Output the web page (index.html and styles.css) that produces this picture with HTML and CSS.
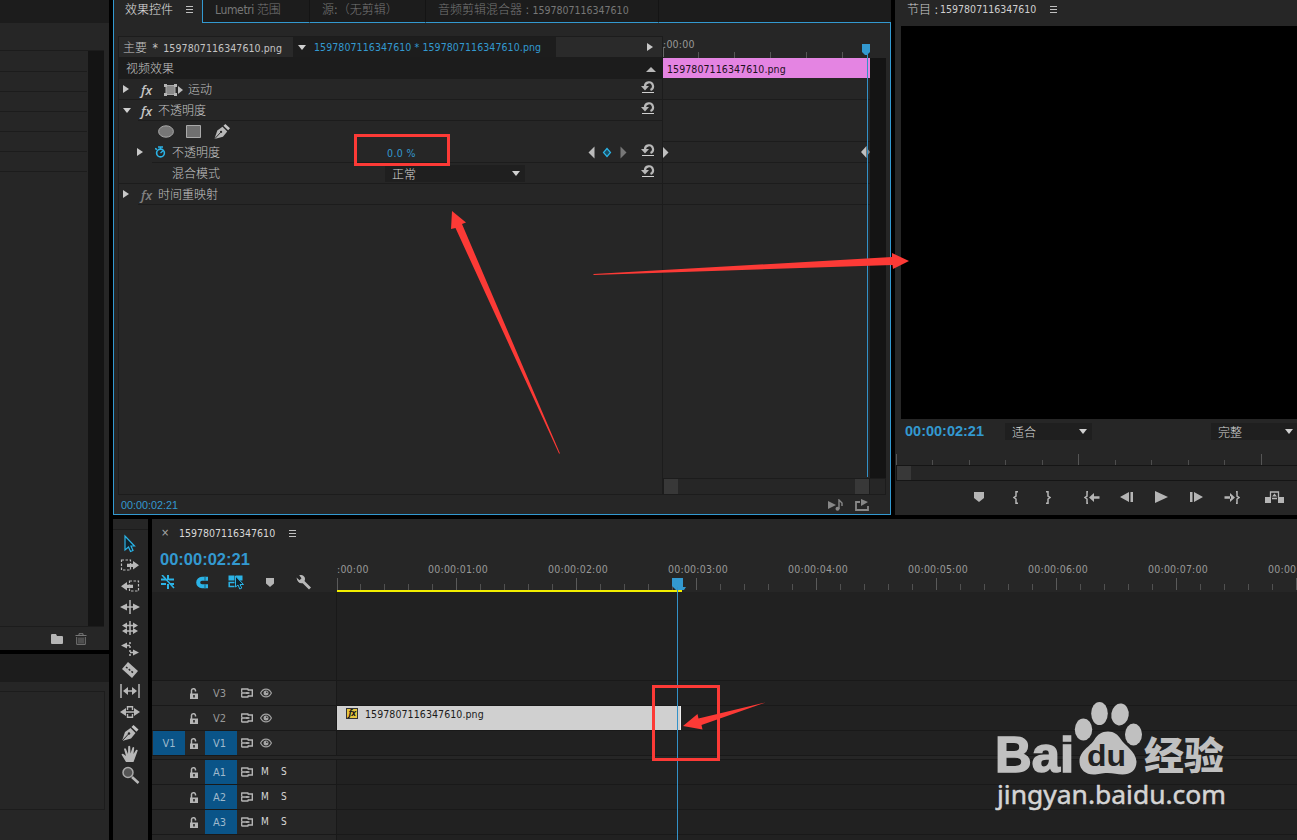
FILE: index.html
```
<!DOCTYPE html>
<html lang="zh-CN">
<head>
  <meta charset="UTF-8" />
  <title>Premiere</title>
  <link rel="stylesheet" href="styles.css">
</head>
<body>

  <!-- Shared icons -->
  <svg class="defs" width="0" height="0">
    <defs>
      <symbol id="reset" viewBox="0 0 14 14">
        <path d="M4 6.500A4 4 0 1 1 9.500 10" fill="none" stroke="#b8b8b8" stroke-width="2.200"/>
        <path d="M0 6h8L4 10.500z" fill="#b8b8b8"/>
        <path d="M1 12.500h12" stroke="#d0d0d0"/>
      </symbol>
      <symbol id="lock" viewBox="0 0 10 12">
        <path d="M2.500 6V3a2 2 0 0 1 4-.5v1" fill="none" stroke="#b5b5b5" stroke-width="1.500"/>
        <path d="M1 5.500h8V11H1z" fill="#b5b5b5"/>
        <path d="M4.200 7h1.600v2.500H4.200z" fill="#262626"/>
      </symbol>
      <symbol id="sync" viewBox="0 0 12 10">
        <path d="M.5 1h7M.5 5h7M.5 9h7M.7.500v4M.7 5v4M7 1v1.500M7 7.500V9" fill="none" stroke="#b5b5b5" stroke-width="1.300"/>
        <path d="M7 2h4.300v6H7M5 5h3.500" fill="none" stroke="#b5b5b5" stroke-width="1.400"/>
      </symbol>
      <symbol id="eye" viewBox="0 0 12 10">
        <path d="M.6 5C3-.2 9-.2 11.400 5 9 10.200 3 10.200.6 5z" fill="none" stroke="#a0a0a0" stroke-width="1.200"/>
        <circle cx="6" cy="5" r="2.500" fill="#a5a5a5"/>
        <circle cx="6.800" cy="4.200" r=".8" fill="#262626"/>
      </symbol>
      <symbol id="pen" viewBox="0 0 18 18">
        <path d="M1 17 4 8l5.500-4 5 5-4.500 5.500z" fill="#b8b8b8"/>
        <path d="M10.500 3l2-2 5 4.500-2 2.200z" fill="#c4c4c4"/>
        <path d="M1 17l6.500-7" stroke="#262626"/>
        <circle cx="8" cy="9.500" r="1.200" fill="#262626"/>
      </symbol>
      <symbol id="marker" viewBox="0 0 10 10">
        <path d="M0 0h10v6L5 10 0 6z" fill="#b5b5b5"/>
      </symbol>
    </defs>
  </svg>

  <div class="app">
    <div class="left">
      <div class="panel project">
        <div class="strip"></div>
        <div class="project-list">
          <div class="project-rows"><i></i><i></i><i></i><i></i><i></i><i></i></div>
          <div class="scroll-track"></div>
        </div>
        <div class="project-foot">
          <svg width="12" height="10" viewBox="0 0 12 10"><path d="M0 1q0-1 1-1h4l1 2h5q1 0 1 1v6q0 1-1 1H1q-1 0-1-1z" fill="#b5b5b5"/></svg>
          <svg width="12" height="12" viewBox="0 0 12 12"><path d="M.5 2.500h11M4 2V.7h4V2M1.700 4v7.400h8.600V4M4 4.500v6M6 4.500v6M8 4.500v6" fill="none" stroke="#777"/></svg>
        </div>
      </div>
      <div class="panel lower">
        <div class="lower-head"></div>
        <div class="lower-box"></div>
      </div>
    </div>

    <div class="main">
      <div class="top">

        <!-- Effect controls -->
        <div class="effects">
          <div class="tabs">
            <div class="tab active">效果控件<span class="menu"></span></div>
            <div class="tab lumetri">Lumetri 范围</div>
            <div class="tab source">源:（无剪辑）</div>
            <div class="tab mixer">音频剪辑混合器 : <span class="num">1597807116347610</span></div>
            <div class="tab rest"></div>
          </div>
          <div class="fx-body">
            <div class="fx-cols">
              <div class="fx-left">
                <div class="fx-head">
                  <div class="master">主要 <span>*</span> <span class="num file">1597807116347610.png</span></div>
                  <div class="clip-name"><i class="tri down"></i><span class="num file">1597807116347610 * 1597807116347610.png</span></div>
                  <div class="fx-toggle"><i class="tri right"></i></div>
                </div>
                <div class="fx-section">视频效果<i class="tri up"></i></div>
                <div class="row">
                  <i class="tri right"></i><span class="fx">fx</span>
                  <svg class="motion" width="20" height="12" viewBox="0 0 20 12"><path d="M2 1.500h9v9H2z" fill="#8a8a8a" stroke="#aaa"/><path d="M0 0h3v3H0zM10 0h3v3h-3zM0 9h3v3H0zM10 9h3v3h-3z" fill="#b5b5b5"/><path d="M14 2l5 4-5 4z" fill="#bbb"/></svg>
                  <span>运动</span>
                  <svg class="reset" width="14" height="14"><use href="#reset"/></svg>
                </div>
                <div class="row indent">
                  <i class="tri down"></i><span class="fx">fx</span><span>不透明度</span>
                  <svg class="reset" width="14" height="14"><use href="#reset"/></svg>
                </div>
                <div class="row masks">
                  <svg width="16" height="13" viewBox="0 0 16 13"><ellipse cx="8" cy="6.500" rx="7.400" ry="5.700" fill="#777" stroke="#aaa"/></svg>
                  <svg width="15" height="13" viewBox="0 0 15 13"><path d="M.5.500h14v12H.5z" fill="#707070" stroke="#aaa"/></svg>
                  <svg width="18" height="17"><use href="#pen"/></svg>
                </div>
                <div class="row prop">
                  <i class="tri right"></i>
                  <svg class="watch" width="11" height="12" viewBox="0 0 11 12"><circle cx="5.500" cy="7" r="3.900" fill="none" stroke="#2bb3e6" stroke-width="1.600"/><path d="M3 1h5M5.500 1v2M0 2.500l2 1M5.500 7L8 4.700" stroke="#2bb3e6" stroke-width="1.400"/></svg>
                  <span class="prop-name">不透明度</span>
                  <span class="value num">0.0 %</span>
                  <svg class="nav" width="39" height="13" viewBox="0 0 39 13"><path d="M6.500.500v12L.5 6.500z" fill="#bbb"/><path d="M19 2.500l3.500 4-3.500 4-3.500-4z" fill="#1a4c60" stroke="#2bb3e6" stroke-width="1.200"/><path d="M32.500.500v12l6-6z" fill="#777"/></svg>
                  <svg class="reset" width="14" height="14"><use href="#reset"/></svg>
                </div>
                <div class="row blend">
                  <span class="prop-name">混合模式</span>
                  <div class="select">正常<i class="tri down"></i></div>
                  <svg class="reset" width="14" height="14"><use href="#reset"/></svg>
                </div>
                <div class="row indent">
                  <i class="tri right"></i><span class="fx dim">fx</span><span>时间重映射</span>
                </div>
              </div>
              <div class="fx-right">
                <div class="fx-ruler num"><span>:00:00</span></div>
                <div class="fx-tracks">
                  <div class="fx-lane">
                    <div class="fx-clip num file">1597807116347610.png</div>
                    <i class="line l1"></i><i class="line l2"></i>
                    <div class="line keys">
                      <svg width="6" height="11" viewBox="0 0 6 11"><path d="M0 0l5.500 5.500L0 11z" fill="#c0c0c0"/></svg>
                      <svg width="10" height="12" viewBox="0 0 10 12"><path d="M6.500 0L1 6l5.500 6z" fill="#c0c0c0"/><path d="M7 2l3 4-3 4z" fill="#888"/></svg>
                    </div>
                    <i class="line l4"></i><i class="line l5"></i>
                  </div>
                  <div class="scroll-track"></div>
                </div>
                <div class="fx-scroll"><div><i></i><i></i></div></div>
                <svg class="fx-playhead" width="9" height="433" viewBox="0 0 9 433"><path d="M0 0h8v8L5 11H3L0 8z" fill="#3399d0"/><path d="M5.500 9v424" stroke="#3391c8"/></svg>
              </div>
            </div>
            <div class="fx-foot">
              <span>00:00:02:21</span>
              <svg width="15" height="12" viewBox="0 0 15 12"><path d="M0 2l8 4-8 4z" fill="#888"/><path d="M11 10V1l3 3v3" fill="none" stroke="#888" stroke-width="1.400"/><circle cx="9.500" cy="9.800" r="2" fill="#888"/></svg>
              <svg width="14" height="12" viewBox="0 0 14 12"><path d="M5 3H1v8h12V7" fill="none" stroke="#888" stroke-width="1.800"/><path d="M6 0l7 3-7 4z" fill="#888"/></svg>
            </div>
          </div>
        </div>

        <!-- Program monitor -->
        <div class="program">
          <div class="program-head">节目 : <span class="num">1597807116347610</span><span class="menu"></span></div>
          <div class="screen"></div>
          <div class="program-bar">
            <span class="timecode">00:00:02:21</span>
            <div class="select fit">适合<i class="tri down"></i></div>
            <div class="select full">完整<i class="tri down"></i></div>
          </div>
          <div class="program-ruler"></div>
          <div class="program-scroll"><i></i></div>
          <div class="transport">
            <span class="mark"><svg width="10" height="10"><use href="#marker"/></svg></span>
            <span class="io in"><svg width="6" height="13" viewBox="0 0 6 13"><path d="M5 .7H3V5L1 6.500 3 8v4.300h2" fill="none" stroke="#b5b5b5" stroke-width="1.500"/></svg></span>
            <span class="io"><svg width="6" height="13" viewBox="0 0 6 13"><path d="M1 .7h2V5l2 1.500L3 8v4.300H1" fill="none" stroke="#b5b5b5" stroke-width="1.500"/></svg></span>
            <span class="go"><svg width="16" height="13" viewBox="0 0 16 13"><path d="M4 .7H3V5L1 6.500 3 8v4.300h1" fill="none" stroke="#b5b5b5" stroke-width="1.500"/><path d="M9 5.200h6.500v2.600H9zM10 2v9L5 6.500z" fill="#b5b5b5"/></svg></span>
            <span><svg width="13" height="10" viewBox="0 0 13 10"><path d="M9 0v10L0 5zM10.500 0H13v10h-2.500z" fill="#b5b5b5"/></svg></span>
            <span><svg width="13" height="12" viewBox="0 0 13 12"><path d="M0 0l13 6-13 6z" fill="#b5b5b5"/></svg></span>
            <span><svg width="13" height="10" viewBox="0 0 13 10"><path d="M4 0v10l9-5zM0 0h2.500v10H0z" fill="#b5b5b5"/></svg></span>
            <span><svg width="16" height="13" viewBox="0 0 16 13"><path d="M12 .7h1V5l2 1.500L13 8v4.300h-1" fill="none" stroke="#b5b5b5" stroke-width="1.500"/><path d="M.5 5.200H7v2.600H.5zM6 2v9l5-4.500z" fill="#b5b5b5"/></svg></span>
            <span class="lift"><svg width="19" height="13" viewBox="0 0 19 13"><path d="M0 6h6v6H0zM13 6h6v6h-6z" fill="#b5b5b5"/><path d="M5.500 7V1h8v6M7 7.500h5" fill="none" stroke="#b5b5b5" stroke-width="1.300"/><path d="M7 5.500L9.500 2.500 12 5.500z" fill="#b5b5b5"/></svg></span>
          </div>
        </div>
      </div>

      <div class="bottom">
        <!-- Tools -->
        <div class="tools">
          <svg viewBox="0 0 20 20"><path d="M5 2v14l3.500-3 2 4.500 2.500-1-2-4.500h3.500z" fill="#10242d" stroke="#2bb3e6" stroke-width="1.200"/></svg>
          <svg viewBox="0 0 20 20"><path d="M1.500 5h9v10h-9z" fill="none" stroke="#b8b8b8" stroke-width="1.200" stroke-dasharray="2.500 1.500"/><path d="M7 8.700h6V6l6 4.200-6 4.200V12H7z" fill="#b8b8b8"/></svg>
          <svg viewBox="0 0 20 20"><path d="M9.500 5h9v10h-9z" fill="none" stroke="#b8b8b8" stroke-width="1.200" stroke-dasharray="2.500 1.500"/><path d="M13 8.700H7V6l-6 4.200 6 4.200V12h6z" fill="#b8b8b8"/></svg>
          <svg viewBox="0 0 20 20"><path d="M10 3v14M3 10h14" stroke="#b8b8b8" stroke-width="1.500"/><path d="M0 10l7-3.500v7zM20 10l-7-3.500v7z" fill="#b8b8b8"/></svg>
          <svg viewBox="0 0 20 20"><path d="M10 3v14M4 7.500h12M4 13h12" stroke="#b8b8b8" stroke-width="1.500"/><path d="M2 7.500l5-3v6zM18 7.500l-5-3v6zM2 13l5-3v6zM18 13l-5-3v6z" fill="#b8b8b8"/></svg>
          <svg viewBox="0 0 20 20"><path d="M5 6.500h5M10 13.500h5" stroke="#b8b8b8" stroke-width="1.500"/><path d="M1 6.500l6-3v6zM19 13.500l-6-3v6z" fill="#b8b8b8"/><path d="M10 3v14" stroke="#b8b8b8" stroke-width="1.500" stroke-dasharray="2 2"/></svg>
          <svg viewBox="0 0 20 20"><path d="M8 2l10 9-6 7L2 9z" fill="#b8b8b8"/><path d="M6 7l8 6.500" stroke="#262626" stroke-width="1.500" stroke-dasharray="2 1.500"/></svg>
          <svg viewBox="0 0 20 20"><path d="M1 3v14M19 3v14" stroke="#b8b8b8" stroke-width="1.500"/><path d="M6 10h8" stroke="#b8b8b8" stroke-width="1.500"/><path d="M3 10l5-4v8zM17 10l-5-4v8z" fill="#b8b8b8"/></svg>
          <svg viewBox="0 0 20 20"><path d="M7.500 8V4.700h5V8M7.500 12v3.300h5V12M4 10h12" fill="none" stroke="#b8b8b8" stroke-width="1.400"/><path d="M0 10l6-4v8zM20 10l-6-4v8z" fill="#b8b8b8"/></svg>
          <svg viewBox="-1 -1 20 20"><use href="#pen" width="18" height="18"/></svg>
          <svg viewBox="0 0 20 20"><path d="M6 18L1.500 10.500q1-1.500 2.500 0L6 12 4 5q1-1.500 2 0l2 5L8.200 2.500q1-1.500 2 0l.3 7L12.500 3.500q1.300-1 1.700.3L13.500 10l2.500-4q1.500-.8 1.700.6L15 14l-1.500 4z" fill="#b8b8b8"/></svg>
          <svg viewBox="0 0 20 20"><path d="M12 12l6.500 6" stroke="#b8b8b8" stroke-width="2.600"/><circle cx="8" cy="7.500" r="5" fill="#555" stroke="#aaa" stroke-width="1.500"/></svg>
        </div>

        <!-- Timeline -->
        <div class="timeline">
          <div class="tl-tab"><span class="close">×</span><span class="num">1597807116347610</span><span class="menu"></span></div>
          <div class="tl-top">
            <div class="tl-info">
              <div class="timecode big">00:00:02:21</div>
              <div class="tl-icons">
                <svg height="14" viewBox="0 0 14 14"><path d="M0 4.500h5M8 4.500h5M0 9h5M9 9h4M7 0v5M7 9v5" stroke="#2bb3e6" stroke-width="2"/><path d="M1 0l12 13" stroke="#2bb3e6" stroke-width="1.600"/></svg>
                <svg height="13" viewBox="0 0 13 13"><path d="M12.500 2.700H6.500a3.800 3.800 0 0 0 0 7.600h6" fill="none" stroke="#2bb3e6" stroke-width="4"/><path d="M9.500 0v4.700M9.500 8.300V13" stroke="#1d5c74"/></svg>
                <svg height="15" viewBox="0 0 15 15"><path d="M0 .500h6v5H0zM7 .500h7v5H7z" fill="#2bb3e6"/><path d="M0 7.500h6M0 11.500h6M.7 7v5" stroke="#2bb3e6" stroke-width="1.500"/><path d="M7 1v11l2.500-2 1.800 4 2-1-1.800-3.500H15z" fill="#10242d" stroke="#2bb3e6"/></svg>
                <svg height="9" viewBox="0 0 8 9"><path d="M0 0h8v5.500L4 9 0 5.500z" fill="#b5b5b5"/></svg>
                <svg height="15" viewBox="0 0 15 15"><path d="M0 2.500l3 2.700 2-2L2.700.300Q6-.8 8 2q1 1.800 0 4l6.500 6.500-2 2L6.200 8.200Q1 9 0 2.500z" fill="#b8b8b8"/></svg>
              </div>
            </div>
            <div class="tl-ruler">
              <div class="tl-labels num">
                <span>:00:00</span><span>00:00:01:00</span><span>00:00:02:00</span><span>00:00:03:00</span><span>00:00:04:00</span><span>00:00:05:00</span><span>00:00:06:00</span><span>00:00:07:00</span><span>00:00:08:00</span>
              </div>
              <div class="tl-ticks"></div>
              <div class="work-area"><i></i></div>
            </div>
          </div>
          <div class="tracks">
            <div class="track empty"><div class="head"></div></div>
            <div class="track">
              <div class="head"><span class="patch"></span><svg class="lock"><use href="#lock"/></svg><span class="target">V3</span><svg class="sync"><use href="#sync"/></svg><svg class="eye"><use href="#eye"/></svg></div>
            </div>
            <div class="track">
              <div class="head"><span class="patch"></span><svg class="lock"><use href="#lock"/></svg><span class="target">V2</span><svg class="sync"><use href="#sync"/></svg><svg class="eye"><use href="#eye"/></svg></div>
              <div class="clip num file"><span class="badge">fx</span>1597807116347610.png</div>
            </div>
            <div class="track">
              <div class="head"><span class="patch on">V1</span><svg class="lock"><use href="#lock"/></svg><span class="target on">V1</span><svg class="sync"><use href="#sync"/></svg><svg class="eye"><use href="#eye"/></svg></div>
            </div>
            <div class="divider"></div>
            <div class="track">
              <div class="head"><span class="patch"></span><svg class="lock"><use href="#lock"/></svg><span class="target on">A1</span><svg class="sync"><use href="#sync"/></svg><b>M</b><b>S</b></div>
            </div>
            <div class="track">
              <div class="head"><span class="patch"></span><svg class="lock"><use href="#lock"/></svg><span class="target on">A2</span><svg class="sync"><use href="#sync"/></svg><b>M</b><b>S</b></div>
            </div>
            <div class="track">
              <div class="head"><span class="patch"></span><svg class="lock"><use href="#lock"/></svg><span class="target on">A3</span><svg class="sync"><use href="#sync"/></svg><b>M</b><b>S</b></div>
            </div>
            <div class="track"><div class="head"></div></div>
          </div>
          <svg class="playhead" width="15" height="262" viewBox="0 0 15 262"><path d="M0 0h11v9h3l-2 3H4L0 8z" fill="#3399d0"/><path d="M5.500 9v253" stroke="#3391c8"/></svg>
        </div>
      </div>
    </div>
  </div>

  <!-- Watermark -->
  <svg class="watermark" width="240" height="120" viewBox="990 695 240 120">
    <g fill="#c0c0c0">
      <text x="995" y="772" class="wm-bai" textLength="79" lengthAdjust="spacingAndGlyphs">Bai</text>
      <ellipse cx="1083.500" cy="729.500" rx="8.700" ry="11"/>
      <ellipse cx="1099.500" cy="713.500" rx="8.300" ry="11.500"/>
      <ellipse cx="1120" cy="714.500" rx="8.700" ry="11" transform="rotate(8 1120 714.500)"/>
      <ellipse cx="1133.500" cy="734.500" rx="8.500" ry="11"/>
      <path d="M1108 731.500c6 0 10 3 13 8s15 12 15.500 22c0 9-6 13-14 13-5 0-9-1.500-15-1.500s-9 1.500-14 1.500c-8 0-14-5-14-13 0-11 11-15 15-22 3-5 7-8 13.500-8z"/>
      <text x="1144" y="769" class="wm-cn" textLength="80" lengthAdjust="spacingAndGlyphs">经验</text>
    </g>
    <text x="1087" y="766" class="wm-du" textLength="39" lengthAdjust="spacingAndGlyphs">du</text>
    <text x="997" y="803.500" class="wm-url" textLength="229" lengthAdjust="spacingAndGlyphs">jingyan.baidu.com</text>
  </svg>

  <!-- Callouts -->
  <svg class="callouts" width="1297" height="840" viewBox="0 0 1297 840">
    <g fill="none" stroke="#fc3a36" stroke-width="3">
      <path d="M355.500 135.500h93v29h-93z"/>
      <path d="M653.500 686.500h65v73h-65z"/>
    </g>
    <g fill="#fc3a36">
      <path d="M452 211l14 11.500-4 1.500L560 453.500h-1L455.500 228l-4.500 1z"/>
      <path d="M909 261l-16 8-.5-4-299 10v-1L892 257v-4z"/>
      <path d="M683 726l14.500-12 1 4.500 67-16-64 22.500 1 4.500z"/>
    </g>
  </svg>

</body>
</html>
```

FILE: styles.css
```
:root {
  --panel: #262626;
  --dark: #1c1c1c;
  --line: #1c1c1c;
  --blue: #3399d0;
  --text: #c4c4c4;
}

* {
  box-sizing: border-box;
  margin: 0;
  padding: 0;
}

body {
  width: 1297px;
  height: 840px;
  overflow: hidden;
  background: #000;
  color: var(--text);
  font-family: "DejaVu Sans Condensed", "Noto Sans CJK SC", sans-serif;
  font-size: 12px;
  font-weight: 300;
  line-height: 16px;
}

svg {
  display: block;
  flex: none;
}

.defs {
  position: absolute;
}

.num {
  font-family: "DejaVu Sans Condensed", "DejaVu Sans", sans-serif;
  font-size: 10.5px;
}

.file {
  letter-spacing: 0.08px;
}

.app {
  display: flex;
  gap: 4px;
  width: 1297px;
  height: 840px;
}

/* small triangles */
.tri {
  flex: none;
  width: 0;
  height: 0;
  border: 0 solid transparent;
}

.tri.right {
  border-width: 4.5px 0 4.5px 6px;
  border-left-color: #c8c8c8;
}

.tri.down {
  border-width: 5px 4.5px 0;
  border-top-color: #d0d0d0;
}

.tri.up {
  border-width: 0 5px 5px;
  border-bottom-color: #b8b8b8;
}

/* hamburger */
.menu {
  flex: none;
  width: 7px;
  height: 7px;
  background: repeating-linear-gradient(#c0c0c0 0 1px, transparent 1px 3px);
}

.select {
  display: flex;
  align-items: center;
  justify-content: space-between;
  height: 17px;
  padding: 2px 5px 0 7px;
  background: #1f1f1f;
  color: #d8d8d8;
}

.select .tri {
  margin-top: -2px;
}

.timecode {
  color: var(--blue);
  font: bold 14.5px/18px "Liberation Sans", sans-serif;
}

.timecode.big {
  font-size: 16.5px;
}

.scroll-track {
  flex: none;
  width: 16px;
  background: #141414;
}

/* left column */
.left {
  display: flex;
  flex-direction: column;
  gap: 4px;
  width: 109px;
  flex: none;
}

.project {
  display: flex;
  flex-direction: column;
  height: 650px;
  background: var(--panel);
}

.strip {
  height: 23px;
  background: var(--dark);
}

.project-list {
  display: flex;
  justify-content: space-between;
  width: 104px;
  height: 577px;
  margin-top: 27px;
  border-top: 1px solid var(--line);
  border-bottom: 1px solid var(--line);
}

.project-rows {
  width: 87px;
}

.project-rows i {
  display: block;
  height: 20px;
  border-bottom: 1px solid var(--line);
}

.project-rows i:first-child {
  height: 21px;
}

.project-foot {
  display: flex;
  align-items: center;
  gap: 12px;
  height: 23px;
  padding-left: 51px;
}

.lower {
  flex: 1;
  background: var(--panel);
}

.lower-head {
  height: 28px;
  background: var(--dark);
}

.lower-box {
  width: 105px;
  height: 119px;
  margin-top: 9px;
  border: 1px solid var(--line);
  border-left: 0;
}

.main {
  display: flex;
  flex-direction: column;
  gap: 4px;
  flex: 1;
  min-width: 0;
}

.top {
  display: flex;
  gap: 4px;
  height: 515px;
}

/* effect controls */
.effects {
  width: 778px;
  flex: none;
}

.tabs {
  display: flex;
  height: 23px;
}

.tab {
  padding-top: 2px;
  background: var(--dark);
  border-right: 1px solid #141414;
  border-bottom: 1px solid var(--blue);
  color: #777;
  white-space: nowrap;
}

.tab.active {
  display: flex;
  gap: 13px;
  width: 90px;
  padding-left: 11px;
  background: var(--panel);
  border: solid var(--blue);
  border-width: 0 1px;
  color: #e0e0e0;
}

.tab.active .menu {
  margin-top: 4px;
}

.tab.lumetri {
  width: 107px;
  padding-left: 12px;
  letter-spacing: -0.35px;
}

.tab.source {
  width: 116px;
  padding-left: 12px;
}

.tab.mixer {
  width: 233px;
  padding-left: 12px;
}

.tab.rest {
  flex: 1;
  border-right: 0;
}

.fx-body {
  height: 492px;
  padding: 13px 4px 0;
  background: var(--panel);
  border: 1px solid var(--blue);
  border-top: 0;
}

.fx-cols {
  display: flex;
  height: 459px;
  border: solid var(--line);
  border-width: 0 0 1px 1px;
}

.fx-left {
  width: 544px;
  flex: none;
  border: solid var(--line);
  border-width: 1px 1px 0 0;
}

.fx-head {
  display: flex;
  height: 20px;
  line-height: 22px;
}

.master {
  width: 174px;
  padding-left: 4px;
  background: #292929;
  white-space: nowrap;
}

.master span {
  margin-left: 2px;
}

.clip-name {
  display: flex;
  align-items: center;
  gap: 8px;
  width: 263px;
  padding-left: 5px;
  background: #1d1d1d;
  color: var(--blue);
  white-space: nowrap;
}

.fx-toggle {
  display: flex;
  align-items: center;
  justify-content: flex-end;
  flex: 1;
  padding-right: 9px;
  background: #2a2a2a;
}

.fx-section {
  display: flex;
  align-items: center;
  justify-content: space-between;
  height: 22px;
  padding: 3px 6px 0 7px;
  background: var(--dark);
  border-bottom: 1px solid var(--line);
}

.row {
  display: flex;
  align-items: center;
  height: 21px;
  padding-left: 4px;
  border-bottom: 1px solid var(--line);
}

.row > span {
  padding-top: 2px;
}

.row > .tri {
  margin-right: 12px;
}

.row > .tri.down {
  margin-right: 10px;
}

.row.indent {
  border-image: linear-gradient(90deg, transparent 20px, var(--line) 20px) 1;
  border-width: 0 0 1px;
}

.fx {
  width: 17px;
  font: italic 600 13px/16px "Open Sans", sans-serif;
}

.fx.dim {
  color: #808080;
}

.motion {
  margin: 1px 4px 0 6px;
}

.reset {
  margin: -4px 7px 0 auto;
}

.masks {
  gap: 12px;
  padding-left: 39px;
  border-bottom: 0;
}

.prop {
  padding-left: 18px;
  border-image: linear-gradient(90deg, transparent 34px, var(--line) 34px) 1;
  border-width: 0 0 1px;
}

.watch {
  margin-right: 6px;
}

.prop-name {
  width: 215px;
}

.value {
  width: 201px;
  color: var(--blue);
  letter-spacing: 0.4px;
}

.blend {
  padding-left: 53px;
}

.blend .prop-name {
  width: 213px;
}

.blend .select {
  width: 140px;
  margin-top: 1px;
}

.fx-right {
  position: relative;
  width: 224px;
}

.fx-ruler {
  width: 208px;
  height: 22px;
  background:
    linear-gradient(#666, #666) 0 11px / 1px 10px no-repeat,
    repeating-linear-gradient(90deg, transparent 0 35px, #555 35px 36px) 0 16px / 100% 6px no-repeat;
  color: #999;
  letter-spacing: 0.2px;
}

.fx-tracks {
  display: flex;
  justify-content: space-between;
  height: 420px;
}

.fx-lane {
  width: 207px;
}

.fx-clip {
  height: 20px;
  padding-left: 4px;
  background: #e484e2;
  color: #1c101c;
  line-height: 22px;
}

.line {
  display: block;
  height: 21px;
  border-bottom: 1px solid var(--line);
}

.line.l1 {
  height: 22px;
}

.line.l2 {
  height: 42px;
}

.line.keys {
  display: flex;
  align-items: center;
  justify-content: space-between;
}

.fx-scroll {
  width: 223px;
  height: 16px;
  padding-right: 15px;
  border: 1px solid var(--line);
  border-width: 1px 1px 0 0;
}

.fx-scroll div {
  display: flex;
  justify-content: space-between;
  height: 15px;
  border: solid var(--line);
  border-width: 0 1px;
}

.fx-scroll i {
  width: 14px;
  background: #383838;
}

.fx-playhead {
  position: absolute;
  left: 199px;
  top: 8px;
}

.fx-foot {
  display: flex;
  align-items: center;
  height: 19px;
  padding: 0 17px 0 3px;
  color: var(--blue);
  font: 10.8px "Liberation Sans", sans-serif;
}

.fx-foot svg {
  margin-left: 12px;
}

.fx-foot span + svg {
  margin-left: auto;
}

/* program monitor */
.program {
  flex: 1;
  min-width: 0;
  background: var(--panel);
}

.program-head {
  display: flex;
  height: 26px;
  padding: 2px 0 0 12px;
  color: #d0d0d0;
}

.program-head .num {
  margin: -1px 0 0 2px;
}

.program-head .menu {
  margin: 4px 0 0 14px;
}

.screen {
  height: 393px;
  margin-left: 6px;
  background: #000;
}

.program-bar {
  display: flex;
  align-items: center;
  height: 25px;
  padding-left: 10px;
}

.program-bar .timecode {
  margin-top: -2px;
}

.select.fit {
  width: 87px;
  margin-left: auto;
}

.select.full {
  width: 86px;
  margin-left: 119px;
  padding-right: 4px;
}

.program-ruler {
  height: 22px;
  margin-left: 1px;
  background:
    repeating-linear-gradient(90deg, #555 0 1px, transparent 1px 182.3px) 0 10px / 100% 12px no-repeat,
    repeating-linear-gradient(90deg, #4d4d4d 0 1px, transparent 1px 36.46px) 0 16px / 100% 6px no-repeat;
}

.program-scroll {
  height: 16px;
  margin: -1px 0 0 1px;
  border: 1px solid #151515;
  border-right: 0;
}

.program-scroll i {
  display: block;
  width: 14px;
  height: 14px;
  background: #383838;
}

.transport {
  display: flex;
  align-items: center;
  height: 32px;
  padding-left: 66px;
}

.transport span {
  display: flex;
  justify-content: center;
  flex: none;
  width: 35px;
}

.transport .io {
  width: 32px;
}

.transport .in {
  margin-left: 4px;
}

.transport .go {
  margin-left: 10px;
}

.transport .lift {
  width: 50px;
}

.bottom {
  display: flex;
  gap: 4px;
  flex: 1;
}

/* tools */
.tools {
  display: flex;
  flex-direction: column;
  align-items: center;
  gap: 1px;
  width: 35px;
  flex: none;
  padding: 15px 1px 0 0;
  background: linear-gradient(var(--line), var(--line)) 0 10px / 100% 1px no-repeat var(--panel);
}

.tools svg {
  width: 20px;
  height: 20px;
}

/* timeline */
.timeline {
  position: relative;
  flex: 1;
  min-width: 0;
  background: #212121;
  overflow: hidden;
}

.tl-tab {
  display: flex;
  align-items: center;
  height: 29px;
  padding: 0 0 1px 9px;
  background: var(--panel);
  color: #d8d8d8;
}

.close {
  width: 18px;
  font-size: 11px;
  color: #aaa;
}

.tl-tab .menu {
  margin-left: 14px;
}

.tl-top {
  display: flex;
  height: 44px;
  background: var(--panel);
}

.tl-info {
  width: 185px;
  flex: none;
  padding: 2px 0 0 8px;
}

.tl-icons {
  display: flex;
  align-items: center;
  height: 28px;
  margin-left: -9px;
}

.tl-icons svg {
  width: 34px;
}

.tl-ruler {
  flex: 1;
  min-width: 0;
  overflow: hidden;
}

.tl-labels {
  display: flex;
  height: 30px;
  line-height: 43px;
  letter-spacing: 0.2px;
  color: #999;
}

.tl-labels span {
  flex: none;
  width: 120px;
  text-align: center;
}

.tl-labels span:first-child {
  width: 61px;
  text-align: left;
}

.tl-ticks {
  height: 12px;
  background:
    linear-gradient(#5a5a5a, #5a5a5a) 0 0 / 1px 12px no-repeat,
    repeating-linear-gradient(90deg, transparent 0 119px, #5a5a5a 119px 120px) 0 0 / 100% 12px no-repeat,
    repeating-linear-gradient(90deg, transparent 0 23px, #505050 23px 24px) 0 6px / 100% 6px no-repeat;
}

.work-area i {
  display: block;
  width: 345px;
  height: 2px;
  background: #f2ee00;
}

.track {
  display: flex;
  height: 25px;
  border-top: 1px solid #191919;
}

.head {
  display: flex;
  align-items: center;
  width: 185px;
  flex: none;
  padding-left: 1px;
  background: var(--panel);
  border-right: 1px solid #191919;
}

.track.empty {
  height: 88px;
  border-top: 0;
}

.track.empty .head {
  background: none;
}

.patch, .target {
  width: 32px;
  height: 24px;
  font-size: 11px;
  line-height: 25px;
  text-align: center;
  color: #999;
}

.target {
  padding-right: 3px;
}

.patch.on, .target.on {
  background: #0a5488;
  color: #9fb9cc;
}

.lock {
  width: 10px;
  height: 12px;
  margin: 1px 6px 0 4px;
}

.sync {
  width: 12px;
  height: 10px;
  margin: 0 7px 0 4px;
}

.eye {
  width: 12px;
  height: 10px;
}

.head b {
  width: 20px;
  padding-left: 1px;
  font-size: 10px;
  font-weight: normal;
  color: #d8d8d8;
}

.clip {
  display: flex;
  width: 344px;
  height: 24px;
  padding-left: 9px;
  background: #d0d0d0;
  border-right: 1px solid #efefef;
  color: #1a1a1a;
}

.badge {
  width: 12px;
  height: 11px;
  margin: 2px 7px 0 0;
  background: #e5c43c;
  border: 1px solid #333;
  font: italic bold 9px/8px "Open Sans", sans-serif;
  letter-spacing: -0.5px;
  text-align: center;
}

.divider {
  height: 4px;
  background: var(--panel);
  border-top: 1px solid #191919;
}

.playhead {
  position: absolute;
  left: 520px;
  top: 59px;
}

/* overlays */
.watermark {
  position: absolute;
  left: 990px;
  top: 695px;
}

.wm-bai {
  font: bold 50px "Liberation Sans", sans-serif;
  stroke: #c0c0c0;
  stroke-width: 1.5px;
}

.wm-cn {
  font: 900 38px "Noto Sans CJK SC", sans-serif;
}

.wm-du {
  font: bold 30px "Liberation Sans", sans-serif;
  fill: #222;
}

.wm-url {
  font: 26px "Noto Sans", sans-serif;
  fill: #d4d4d4;
  stroke: #d4d4d4;
  stroke-width: 0.5px;
}

.callouts {
  position: absolute;
  left: 0;
  top: 0;
  pointer-events: none;
}
```
